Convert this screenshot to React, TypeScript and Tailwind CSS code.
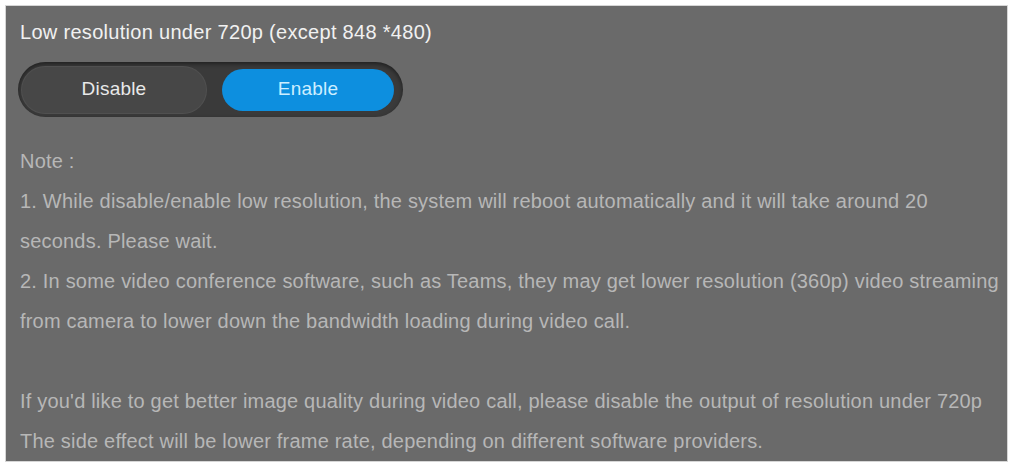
import { useState } from 'react';

export default function App() {
  const [enabled, setEnabled] = useState(true);

  const pill = (active: boolean) =>
    active ? 'bg-[#0d8fdf] text-[#cdeeff]' : 'bg-[#474747] text-[#e9e9e9] shadow-[0_0_0_1px_#505050]';

  return (
    <div className="min-h-screen bg-white p-[5px] font-['Liberation_Sans',Arial,sans-serif]">
      <div className="h-[457px] w-[1003px] border border-[#d6d6d6] bg-[#6a6a6a] pl-[14px] pr-[4px] pt-[14px]">
        <h1 className="text-[20px] leading-[24px] tracking-[0.3px] text-[#f1f1f1]">
          Low resolution under 720p (except 848 *480)
        </h1>

        {/* segmented on/off switch */}
        <div className="ml-[-2px] mt-[18px] flex h-[55px] w-[385px] items-center gap-[16px] rounded-full bg-[#3a3a3a] pl-[4px] shadow-[inset_0_2px_4px_rgba(0,0,0,0.45)]">
          <button
            onClick={() => setEnabled(false)}
            className={`h-[46px] w-[184px] rounded-full text-[19px] tracking-[0.2px] ${pill(!enabled)}`}
          >
            Disable
          </button>
          <button
            onClick={() => setEnabled(true)}
            className={`h-[42px] w-[172px] rounded-full text-[19px] tracking-[0.2px] ${pill(enabled)}`}
          >
            Enable
          </button>
        </div>

        <div className="mt-[24px] whitespace-nowrap text-[20px] leading-[40px] tracking-[0.2px] text-[#b7b7b7]">
          <p>Note :</p>
          <p>
            1. While disable/enable low resolution, the system will reboot automatically and it will take around 20
            <br />
            seconds. Please wait.
          </p>
          <p>
            2. In some video conference software, such as Teams, they may get lower resolution (360p) video streaming
            <br />
            from camera to lower down the bandwidth loading during video call.
          </p>
          <p className="mt-[40px]">
            If you&apos;d like to get better image quality during video call, please disable the output of resolution
            under 720p
          </p>
          <p>The side effect will be lower frame rate, depending on different software providers.</p>
        </div>
      </div>
    </div>
  );
}
